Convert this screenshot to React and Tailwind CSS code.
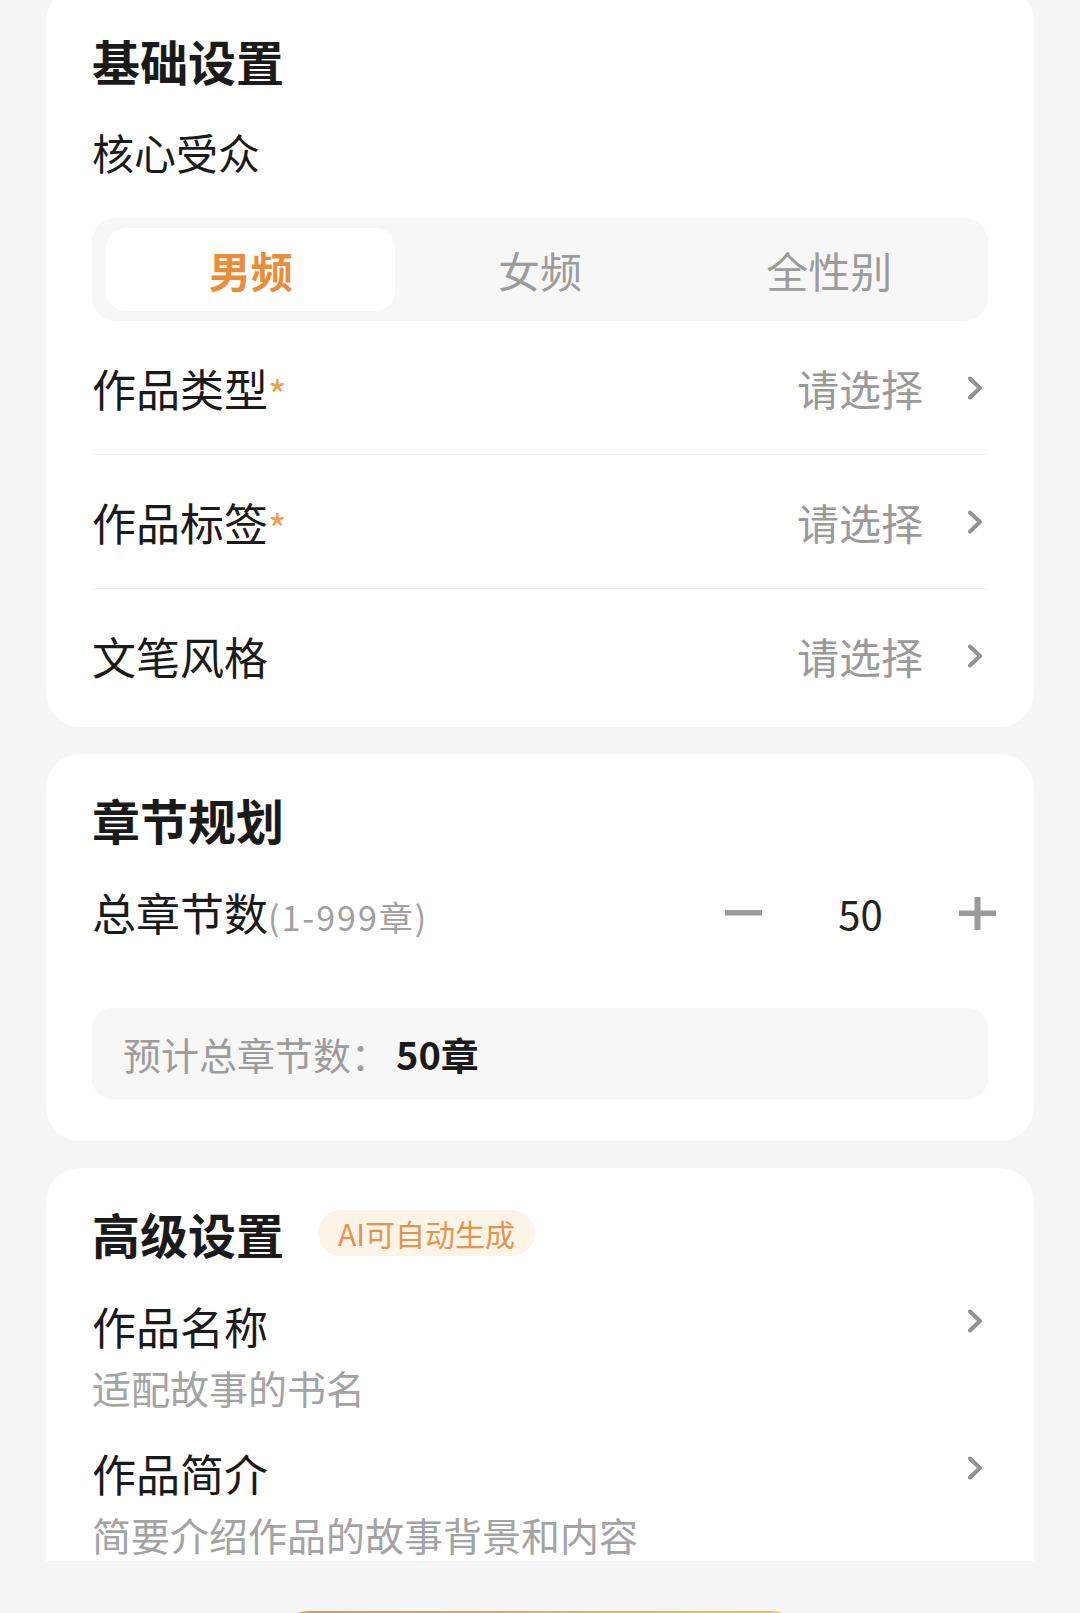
import React from 'react';

const Chevron = ({ className = '' }) => (
  <svg width="16" height="24" viewBox="0 0 16 24" className={className} fill="none">
    <path d="M3 2.5 L13 12 L3 21.5" stroke="#929292" strokeWidth="4" strokeLinecap="round" strokeLinejoin="round" />
  </svg>
);

const SelectRow = ({ label, required, last }) => (
  <div className={`flex h-[134px] items-center justify-between ${last ? '' : 'border-b border-[#efefef]'}`}>
    <div className="flex items-start">
      <span className="text-[44px] leading-[56px] text-[#1a1a1a]">{label}</span>
      {required && <span className="mt-[14px] text-[40px] leading-none text-[#f0a04e]">*</span>}
    </div>
    <div className="mr-[5px] flex items-center">
      <span className="text-[42px] leading-[56px] text-[#9a9a9a]">请选择</span>
      <Chevron className="ml-[44px]" />
    </div>
  </div>
);

const DetailRow = ({ label, hint, className = '', hintClass = 'mt-[6px] leading-[54px]' }) => (
  <div className={className}>
    <div className="flex items-center justify-between">
      <span className="text-[44px] leading-[56px] text-[#1a1a1a]">{label}</span>
      <Chevron className="mr-[5px] mb-[10px]" />
    </div>
    <p className={`text-[39px] text-[#a3a3a3] ${hintClass}`}>{hint}</p>
  </div>
);

export default function App() {
  const tabs = ['男频', '女频', '全性别'];

  return (
    <div className="min-h-screen overflow-hidden bg-[#f5f5f5] font-['Noto_Sans_CJK_SC','Noto_Sans',sans-serif] text-[#1a1a1a]">
      <div className="px-[46px]">
        {/* 基础设置 */}
        <div className="-mt-[12px] rounded-[34px] bg-white px-[46px] pt-[40px] pb-[4px]">
          <h2 className="text-[48px] font-bold leading-[64px]">基础设置</h2>
          <p className="mt-[32px] text-[42px] leading-[56px]">核心受众</p>
          <div className="mt-[38px] grid h-[103px] grid-cols-3 rounded-[24px] bg-[#f7f7f7] px-[14px] py-[10px]">
            {tabs.map((t, i) => (
              <div
                key={t}
                className={`flex items-center justify-center rounded-[20px] text-[42px] leading-[56px] ${
                  i === 0 ? 'bg-white font-bold text-[#ea8d38]' : 'text-[#9c9c9c]'
                }`}
              >
                {t}
              </div>
            ))}
          </div>
          <SelectRow label="作品类型" required />
          <SelectRow label="作品标签" required />
          <SelectRow label="文笔风格" last />
        </div>

        {/* 章节规划 */}
        <div className="mt-[27px] rounded-[34px] bg-white px-[46px] pt-[33px] pb-[42px]">
          <h2 className="text-[48px] font-bold leading-[64px]">章节规划</h2>
          <div className="mt-[34px] flex h-[56px] items-center justify-between">
            <div className="flex items-baseline">
              <span className="text-[44px] leading-[56px]">总章节数</span>
              <span className="text-[34px] tracking-[2px] text-[#a0a0a0]">(1-999章)</span>
            </div>
            <div className="-mr-[8px] flex items-center">
              <svg width="37" height="6" viewBox="0 0 37 6">
                <rect x="0" y="0" width="37" height="5.5" fill="#9a9a9a" />
              </svg>
              <span className="w-[197px] text-center text-[40px] leading-[56px] text-[#222222]">50</span>
              <svg width="37" height="33" viewBox="0 0 37 33">
                <rect x="0" y="13.5" width="37" height="5.5" fill="#9a9a9a" />
                <rect x="15.5" y="0" width="6" height="33" fill="#9a9a9a" />
              </svg>
            </div>
          </div>
          <div className="mt-[67px] flex h-[91px] items-center rounded-[20px] bg-[#f7f7f7] pl-[31px]">
            <span className="text-[38px] leading-[52px] text-[#9c9c9c]">预计总章节数：</span>
            <span className="ml-[7px] text-[38px] font-bold leading-[52px] text-[#1a1a1a]">50章</span>
          </div>
        </div>

        {/* 高级设置 (continues under the bottom bar) */}
        <div className="mt-[27px] rounded-t-[34px] bg-white px-[46px] pt-[33px] pb-[6px]">
          <div className="flex items-center">
            <h2 className="text-[48px] font-bold leading-[64px]">高级设置</h2>
            <span className="ml-[34px] h-[46px] rounded-full bg-[#fdf4e8] px-[20px] text-[30px] leading-[46px] text-[#e3954f]">
              AI可自动生成
            </span>
          </div>
          <DetailRow className="mt-[33px]" label="作品名称" hint="适配故事的书名" />
          <DetailRow
            className="mt-[31px]"
            label="作品简介"
            hint="简要介绍作品的故事背景和内容"
            hintClass="mt-[12px] leading-[42px]"
          />
        </div>
      </div>

      <div className="flex justify-center pt-[50px]">
        <button
          aria-label="下一步"
          className="h-[110px] w-[540px] rounded-[40px] bg-gradient-to-r from-[#ee8f3a] to-[#f7c632]"
        />
      </div>
    </div>
  );
}
